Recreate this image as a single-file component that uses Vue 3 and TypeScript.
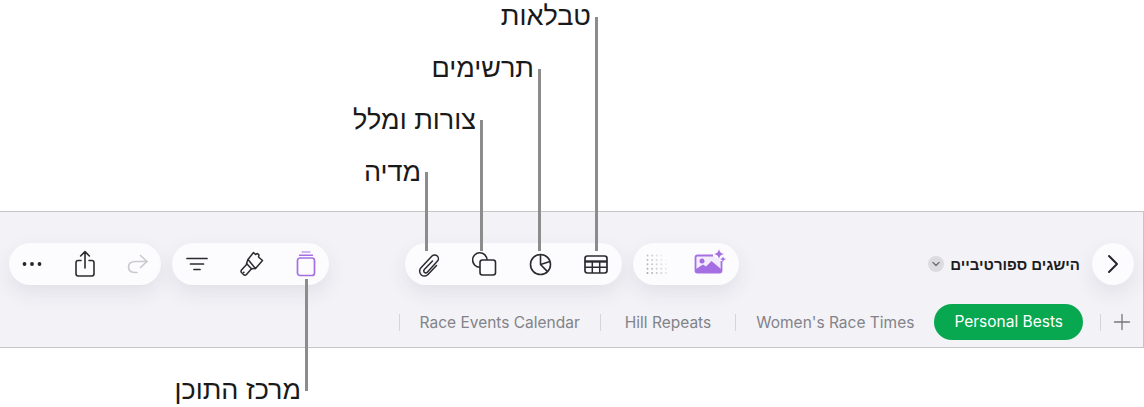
<template>
  <div class="page">
    <div class="callouts">
      <div v-for="c in callouts" :key="c.text" class="callout" :style="{ left: c.x + 'px', top: c.top + 'px', height: c.height + 'px' }">
        <span class="callout-text" :style="{ top: c.textTop + 'px' }">{{ c.text }}</span>
      </div>
    </div>

    <div class="toolbar">
      <div class="top-row">
        <div class="side">
          <div class="pill pill-more">
            <button class="tool">
              <svg width="22" height="6" viewBox="0 0 22 6"><g fill="#26262a"><circle cx="3.5" cy="3" r="1.9" /><circle cx="11" cy="3" r="1.9" /><circle cx="18.5" cy="3" r="1.9" /></g></svg>
            </button>
            <button class="tool">
              <svg width="22" height="28" viewBox="0 0 22 28" fill="none" stroke="#2b2b2f" stroke-width="1.6" stroke-linecap="round" stroke-linejoin="round"><path d="M11 18V2M6.6 6 11 1.6 15.4 6" /><path d="M7 10.5H4.2Q2 10.5 2 12.7V23.8Q2 26 4.2 26H17.8Q20 26 20 23.8V12.7Q20 10.500 17.8 10.5H15" /></svg>
            </button>
            <button class="tool">
              <svg width="22" height="20" viewBox="0 0 22 20" fill="none" stroke="#c9cacd" stroke-width="1.6" stroke-linecap="round" stroke-linejoin="round"><path d="M20 7.500H8.500Q1.500 7.500 1.500 13T8.500 18.500H10" /><path d="M13.500 1.500 20 7.500 13.500 13.500" /></svg>
            </button>
          </div>
          <div class="pill pill-format">
            <button class="tool">
              <svg width="22" height="14" viewBox="0 0 22 14" fill="none" stroke="#2b2b2f" stroke-width="1.7" stroke-linecap="round"><path d="M1 1.5H21M4.5 7H17.5M8 12.5H14" /></svg>
            </button>
            <button class="tool">
              <svg width="24" height="26" viewBox="0 0 24 26" fill="none" stroke="#2b2b2f" stroke-width="1.5" stroke-linecap="round" stroke-linejoin="round"><path d="M8 8.500 13.500 1.500 15.500 3.500 17.500 2.500 19 4 18.500 6 22.500 9.500 15.500 17.500Z" /><path d="M8 8.500 6.500 12.500 11.500 17.800 15.500 17.500" /><path d="M7 13 1.500 19Q.5 20.500 1.500 21.500L3.500 23.500Q5 25 6.500 23.500L11.500 17.800" /><circle cx="3.800" cy="21.300" r="0.9" fill="#2b2b2f" stroke="none" /></svg>
            </button>
            <button class="tool">
              <svg width="20" height="26" viewBox="0 0 20 26" fill="none" stroke="#a56fe3" stroke-linecap="round"><rect x="1.5" y="7" width="17" height="17.5" rx="2.5" stroke-width="1.7" /><path d="M3.5 4.2H16.5" stroke-width="1.4" /><path d="M6 1H14" stroke-width="1.2" /></svg>
            </button>
          </div>
        </div>

        <div class="center">
          <div class="pill pill-insert">
            <button class="tool">
              <svg width="22" height="25" viewBox="0 0 22 25" fill="none" stroke="#2b2b2f" stroke-width="1.5" stroke-linecap="round" stroke-linejoin="round"><path d="M14.500 9 6.300 17.500A2 2 0 0 0 9.300 20.300L19.300 9.300A3.600 3.600 0 0 0 14 4L3 15.800A4.800 4.800 0 0 0 10 22.600L18.500 13.500" /></svg>
            </button>
            <button class="tool">
              <svg width="25" height="24" viewBox="0 0 25 24" fill="none" stroke="#2b2b2f" stroke-width="1.6" stroke-linejoin="round"><path d="M8 15.200A7.200 7.200 0 1 1 15 8" /><rect x="8" y="8" width="15.5" height="15" rx="2.4" /></svg>
            </button>
            <button class="tool">
              <svg width="23" height="23" viewBox="0 0 23 23" fill="none" stroke="#2b2b2f" stroke-width="1.6" stroke-linejoin="round"><circle cx="11.5" cy="11.5" r="10" /><path d="M11.5 1.5V11.5L18.5 18.6" /><path d="M11.5 11.5 21 8.5" /></svg>
            </button>
            <button class="tool">
              <svg width="24" height="19" viewBox="0 0 24 19" fill="none" stroke="#2b2b2f" stroke-linejoin="round"><rect x="1" y="1" width="22" height="17" rx="2.4" stroke-width="1.7" /><path d="M1 6.5H23" stroke-width="2.4" /><path d="M1 12.2H23M8.3 6.5V18M15.7 6.5V18" stroke-width="1.5" /></svg>
            </button>
          </div>
          <div class="pill pill-extra">
            <button class="tool">
              <svg width="21" height="20" viewBox="0 0 21 20" fill="#a9aaae"><template v-for="r in 5" :key="r"><circle v-for="d in 5" :key="d" :cx="1.500 + (d - 1) * 4.600" :cy="1.500 + (r - 1) * 4.400" r="1" :opacity="1 - (d - 1) * 0.17 - (5 - r) * 0.08" /></template></svg>
            </button>
            <button class="tool">
              <svg class="image-icon" width="32" height="25" viewBox="0 0 32 25"><path d="M19 6.500H3.500Q1.500 6.500 1.500 8.500V21.500Q1.500 23.500 3.500 23.500H25.500Q27.500 23.500 27.500 21.500V12" fill="#f3ecfc" stroke="#a56fe3" stroke-width="1.800" /><circle cx="8" cy="12" r="2.500" fill="#a56fe3" /><path d="M2 23V20L9 15.500 12 17.500 17.500 12 27 20V23Z" fill="#a56fe3" /><path d="M25 0Q25.700 4.300 30 5 25.700 5.700 25 10 24.300 5.700 20 5 24.300 4.300 25 0Z" fill="#a56fe3" /><path d="M29 7.500Q29.300 9.700 32 10 29.300 10.300 29 13 28.700 10.300 26 10 28.700 9.700 29 7.500Z" fill="#a56fe3" /></svg>
            </button>
          </div>
        </div>

        <div class="side side-end">
          <div class="doc-title">
            <span class="chevron-badge">
              <svg width="8" height="6" viewBox="0 0 8 6" fill="none" stroke="#6d6d72" stroke-width="1.3" stroke-linecap="round" stroke-linejoin="round"><path d="M1 1.500 4 4.500 7 1.500" /></svg>
            </span>
            <span class="doc-name" dir="rtl">הישגים ספורטיביים</span>
          </div>
          <button class="round-btn">
            <svg width="12" height="20" viewBox="0 0 12 20" fill="none" stroke="#26262a" stroke-width="2" stroke-linecap="round" stroke-linejoin="round"><path d="M2 2 10 10 2 18" /></svg>
          </button>
        </div>
      </div>

      <div class="tabs">
        <template v-for="t in tabs" :key="t.name">
          <span class="tab-sep"></span>
          <span class="tab" :class="{ 'tab-wide': t.wide }">{{ t.name }}</span>
        </template>
        <span class="tab-active">Personal Bests</span>
        <span class="tab-sep tab-sep-last"></span>
        <svg class="plus" width="18" height="18" viewBox="0 0 18 18" stroke="#77777c" stroke-width="1.3" stroke-linecap="round"><path d="M9 1.500V16.500M1.500 9H16.500" /></svg>
      </div>
    </div>
  </div>
</template>

<script setup lang="ts">
interface Callout {
  text: string
  x: number
  top: number
  height: number
  textTop: number
}

const callouts: Callout[] = [
  { text: 'טבלאות', x: 595, top: 17, height: 234, textTop: -18 },
  { text: 'תרשימים', x: 538, top: 69, height: 182, textTop: -18 },
  { text: 'צורות ומלל', x: 480, top: 120, height: 131, textTop: -17 },
  { text: 'מדיה', x: 425, top: 172, height: 79, textTop: -17 },
  { text: 'מרכז התוכן', x: 305, top: 279, height: 112, textTop: 94 },
]

const tabs = [
  { name: 'Race Events Calendar', wide: false },
  { name: 'Hill Repeats', wide: true },
  { name: "Women's Race Times", wide: false },
]
</script>

<style>
html,
body {
  background: #fff;
  overflow: hidden;
}
</style>

<style scoped>
.page {
  position: relative;
  width: 1144px;
  height: 407px;
  padding-top: 211px;
  box-sizing: border-box;
  font-family: "Liberation Sans", Arial, sans-serif;
}
.callouts {
  position: absolute;
  inset: 0;
  z-index: 2;
  pointer-events: none;
}
.callout {
  position: absolute;
  width: 3px;
  background: #8c8c8c;
}
.callout-text {
  position: absolute;
  right: 7px;
  font-size: 27px;
  line-height: 34px;
  color: #1a1a1a;
  white-space: nowrap;
  direction: rtl;
}
.toolbar {
  box-sizing: border-box;
  width: 1145px;
  height: 137px;
  margin-left: -1px;
  padding: 31px 9px 0 9px;
  background: #f2f2f7;
  border: 1px solid #c6c6c8;
  display: flex;
  flex-direction: column;
}
.top-row {
  display: flex;
  align-items: center;
  height: 42px;
}
.side {
  display: flex;
  gap: 11px;
  align-items: center;
}
.center {
  display: flex;
  gap: 11px;
  margin-left: 76px;
}
.side-end {
  margin-left: auto;
  gap: 12px;
}
.pill {
  height: 42px;
  border-radius: 21px;
  background: #fcfcfe;
  box-shadow: 0 8px 20px rgba(60, 60, 80, 0.09);
  display: flex;
  align-items: center;
  justify-content: space-between;
  box-sizing: border-box;
}
.pill-more { width: 152px; padding: 0 7px; }
.pill-format { width: 157px; padding: 0 7px 0 9px; }
.pill-insert { width: 217px; padding: 0 10px 0 8px; }
.pill-extra { width: 106px; padding: 0 13px 0 7px; }
.tool {
  border: 0;
  padding: 0;
  background: none;
  display: flex;
  align-items: center;
  justify-content: center;
  width: 32px;
  height: 32px;
}
.image-icon {
  margin-bottom: 5px;
}
.doc-title {
  display: flex;
  align-items: center;
  gap: 6px;
}
.chevron-badge {
  width: 16px;
  height: 16px;
  border-radius: 50%;
  background: #dcdce0;
  display: flex;
  align-items: center;
  justify-content: center;
}
.doc-name {
  font-size: 15px;
  font-weight: 700;
  color: #1c1c1e;
  white-space: nowrap;
}
.round-btn {
  width: 42px;
  height: 42px;
  border: 0;
  padding: 0;
  border-radius: 50%;
  background: #fcfcfe;
  box-shadow: 0 8px 20px rgba(60, 60, 80, 0.09);
  display: flex;
  align-items: center;
  justify-content: center;
}
.tabs {
  display: flex;
  align-items: center;
  justify-content: flex-end;
  height: 36px;
  margin-top: 19px;
  font-family: Inter, "Liberation Sans", sans-serif;
  font-size: 15.5px;
}
.tab {
  color: #838388;
  padding: 0 20px;
  white-space: nowrap;
}
.tab-wide {
  padding: 0 24px;
}
.tab-sep {
  width: 1px;
  height: 17px;
  background: #d5d5d8;
}
.tab-active {
  height: 36px;
  line-height: 36px;
  padding: 0 20px;
  border-radius: 18px;
  background: #07a84f;
  color: #fff;
  white-space: nowrap;
}
.tab-sep-last {
  margin-left: 17px;
}
.plus {
  margin: 0 3px 0 12px;
}
</style>
